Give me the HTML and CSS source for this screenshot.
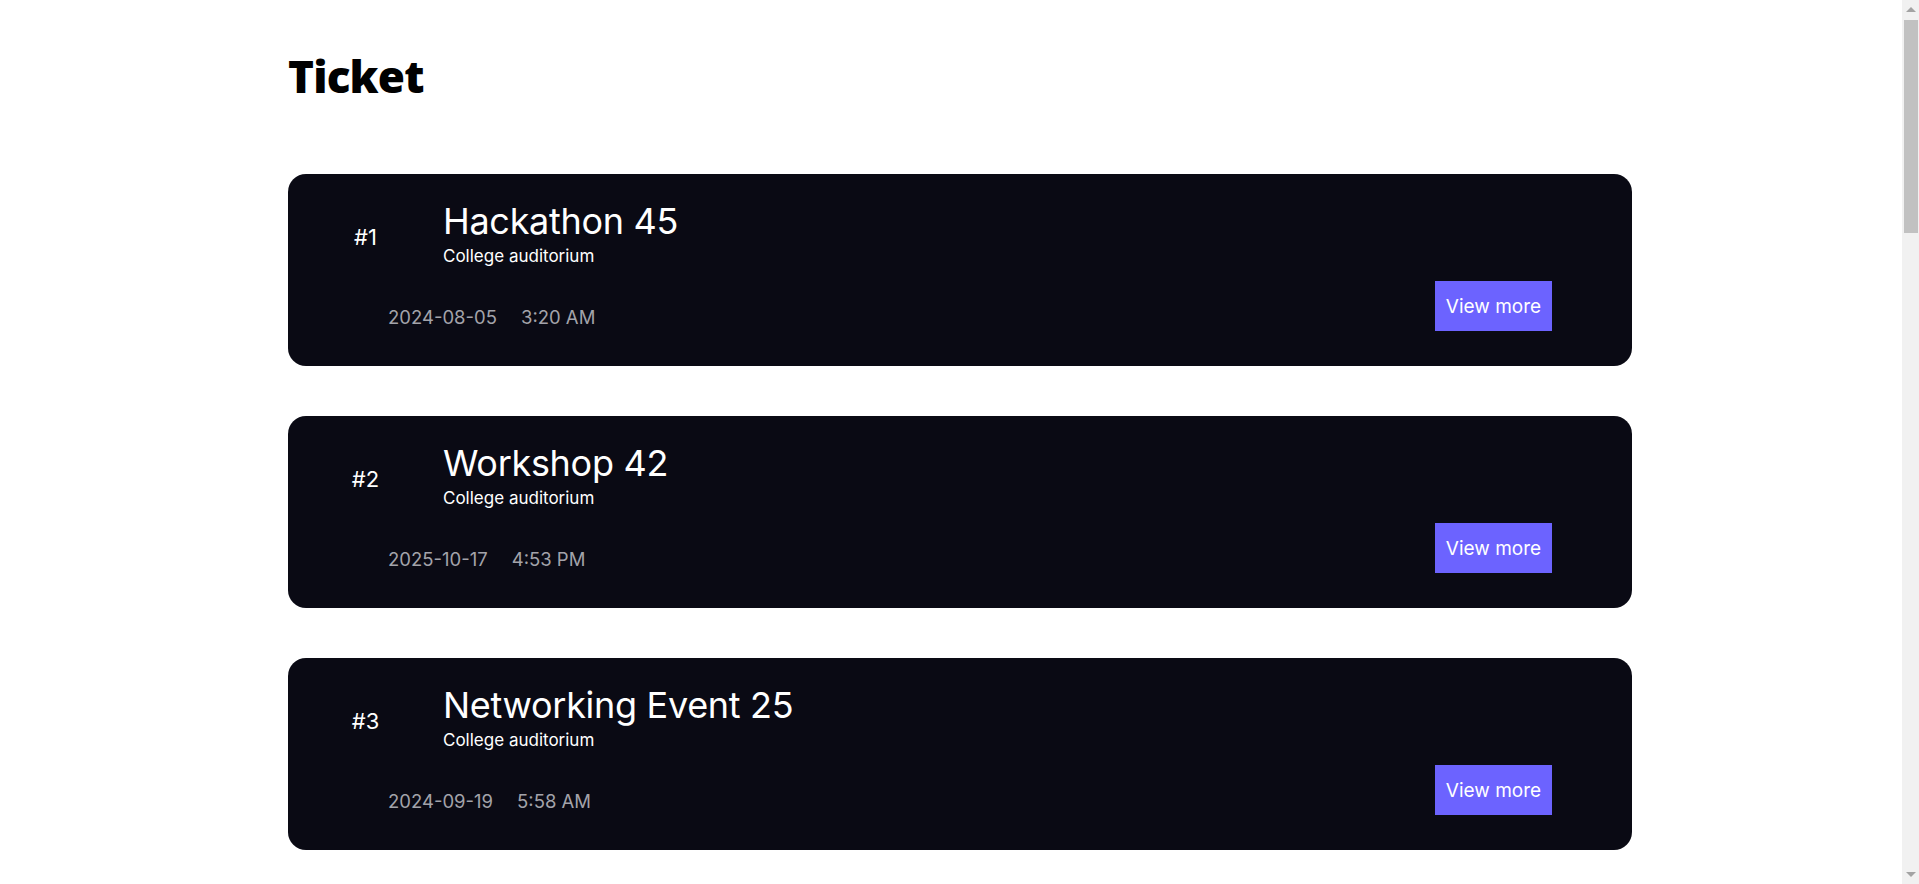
FILE: index.html
```html
<!DOCTYPE html>
<html lang="en">
<head>
<meta charset="utf-8">
<title>Ticket</title>
<link rel="stylesheet" href="styles.css">
</head>
<body>
<main class="page">
  <h1 class="page-title">Ticket</h1>
  <section class="ticket-list">
    <article class="ticket">
      <div class="ticket-top">
        <div class="ticket-num">#1</div>
        <div class="ticket-info">
          <h2 class="ticket-name">Hackathon 45</h2>
          <p class="ticket-venue">College auditorium</p>
        </div>
      </div>
      <div class="ticket-bottom">
        <div class="ticket-meta"><span>2024-08-05</span><span>3:20 AM</span></div>
        <button class="ticket-btn">View more</button>
      </div>
    </article>
    <article class="ticket">
      <div class="ticket-top">
        <div class="ticket-num">#2</div>
        <div class="ticket-info">
          <h2 class="ticket-name">Workshop 42</h2>
          <p class="ticket-venue">College auditorium</p>
        </div>
      </div>
      <div class="ticket-bottom">
        <div class="ticket-meta"><span>2025-10-17</span><span>4:53 PM</span></div>
        <button class="ticket-btn">View more</button>
      </div>
    </article>
    <article class="ticket">
      <div class="ticket-top">
        <div class="ticket-num">#3</div>
        <div class="ticket-info">
          <h2 class="ticket-name">Networking Event 25</h2>
          <p class="ticket-venue">College auditorium</p>
        </div>
      </div>
      <div class="ticket-bottom">
        <div class="ticket-meta"><span>2024-09-19</span><span>5:58 AM</span></div>
        <button class="ticket-btn">View more</button>
      </div>
    </article>
  </section>
</main>
<div class="scrollbar" aria-hidden="true">
  <span class="scroll-arrow scroll-up"></span>
  <span class="scroll-thumb"></span>
  <span class="scroll-arrow scroll-down"></span>
</div>
</body>
</html>
```

FILE: styles.css
```css
html, body {
  margin: 0;
  padding: 0;
  background: #ffffff;
}

body {
  font-family: Inter, "Noto Sans", "Liberation Sans", sans-serif;
  color: #000;
}

.page {
  width: 1344px;
  margin-left: 288px;
  padding-bottom: 20px;
}

.page-title {
  font-family: "Open Sans", Lato, sans-serif;
  font-weight: 800;
  font-size: 44px;
  line-height: 52px;
  margin: 50px 0 72px;
  letter-spacing: -0.8px;
}

.ticket-list {
  display: flex;
  flex-direction: column;
  gap: 50px;
}

.ticket {
  box-sizing: border-box;
  height: 192px;
  background: #0a0a14;
  border-radius: 18px;
  padding: 26px 80px 35px 40px;
  display: flex;
  flex-direction: column;
  justify-content: space-between;
  color: #fff;
}

.ticket-top {
  display: flex;
  align-items: center;
}

.ticket-num {
  width: 75px;
  text-align: center;
  font-size: 22px;
  padding-top: 6px;
}

.ticket-info {
  margin-left: 40px;
}

.ticket-name {
  margin: 0;
  font-size: 36px;
  font-weight: 400;
  line-height: 42px;
  letter-spacing: -0.3px;
}

.ticket-venue {
  margin: 3px 0 0;
  font-size: 17px;
  line-height: 22px;
}

.ticket-bottom {
  display: flex;
  justify-content: space-between;
  align-items: flex-end;
  padding-left: 60px;
}

.ticket-meta {
  display: flex;
  gap: 24px;
  font-size: 18.5px;
  color: #a3a3aa;
  line-height: 22px;
  padding-bottom: 3px;
}

.ticket-btn {
  font-family: inherit;
  background: #6c63ff;
  color: #fff;
  border: none;
  border-radius: 0;
  width: 117px;
  height: 50px;
  font-size: 19px;
  padding: 0;
  cursor: pointer;
}

.scrollbar {
  position: fixed;
  top: 0;
  right: 0;
  width: 17px;
  height: 100vh;
  background: #f1f1f1;
}

.scroll-thumb {
  position: absolute;
  left: 2px;
  right: 1px;
  top: 20px;
  height: 213px;
  background: #c1c1c1;
}

.scroll-arrow {
  position: absolute;
  left: 4px;
  width: 0;
  height: 0;
  border-left: 5px solid transparent;
  border-right: 5px solid transparent;
}

.scroll-up {
  top: 7px;
  border-bottom: 5px solid #a3a3a3;
}

.scroll-down {
  bottom: 7px;
  border-top: 5px solid #a3a3a3;
}
```
